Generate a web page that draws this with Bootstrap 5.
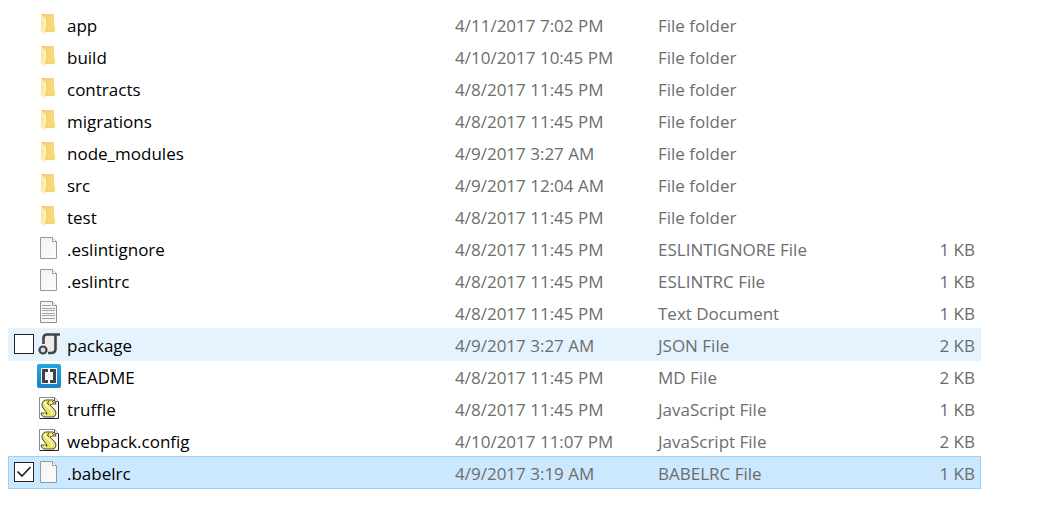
<!DOCTYPE html>
<html lang="en">
<head>
<meta charset="utf-8">
<meta name="viewport" content="width=device-width, initial-scale=1">
<title>Project files</title>
<link rel="stylesheet" href="https://cdn.jsdelivr.net/npm/bootstrap@5.3.0/dist/css/bootstrap.min.css">
<style>
body { font-family: "Open Sans", "Noto Sans", sans-serif; font-size: 17px; line-height: 24px; color: #000; background: #fff; }
.file-pane { padding: 8px 56px 24px 8px; }
.file-list { --bs-table-bg: transparent; table-layout: fixed; }
.file-list > tbody > tr > td { height: 32px; padding: 4px 0 0; vertical-align: top; white-space: nowrap; color: #6d6d6d; line-height: 28px; }
.file-list > tbody > tr > td:last-child { padding-right: 6px; }
.col-name { width: 447px; }
.col-date { width: 203px; }
.col-size { width: 100px; }
.name-cell { height: 28px; padding-left: 6px; color: #000; }
.name-cell svg { width: 24px; height: 24px; margin: 0 6px 4px 3px; flex: none; }
.pick { appearance: none; width: 20px; height: 20px; margin: 0 0 4px; border: 1px solid #222; background: #fff; border-radius: 0; flex: none; }
.pick:checked { background: #fff url("data:image/svg+xml,%3Csvg xmlns='http://www.w3.org/2000/svg' viewBox='0 0 18 18'%3E%3Cpath d='M2.5 8.5l4.5 4.5 8.5-9' fill='none' stroke='%23222' stroke-width='1.7'/%3E%3C/svg%3E") center / 18px; }
.file-list .row-hover { background: #e5f3ff; box-shadow: 0 1px #e5f3ff; }
.file-list .row-selected { background: #cce8ff; outline: 1px solid #99d1ff; outline-offset: -1px; }
.file-list > tbody > tr.row-selected > td { height: 33px; }
</style>
</head>
<body>
<svg class="position-absolute" width="0" height="0" aria-hidden="true">
  <defs>
    <linearGradient id="gold" x2="1"><stop stop-color="#e8c35e"/><stop offset=".35" stop-color="#f4d272"/><stop offset="1" stop-color="#fadb7c"/></linearGradient>
    <linearGradient id="flap" x2="1"><stop stop-color="#ffe69c"/><stop offset="1" stop-color="#fff0bd"/></linearGradient>
    <linearGradient id="sheet" x2="1" y2="1"><stop stop-color="#f1f3f3"/><stop offset="1" stop-color="#fdfdfd"/></linearGradient>
    <linearGradient id="azure" y2="1" x2="0"><stop stop-color="#1fa7e4"/><stop offset="1" stop-color="#1a82c8"/></linearGradient>
    <symbol id="i-folder" viewBox="0 0 24 24">
      <path d="M4 2h13v11l1 1v6H6L4 18z" fill="url(#gold)"/><path d="M4 2l5 4v11l-1 1v5l-4-3z" fill="url(#flap)"/>
    </symbol>
    <symbol id="i-file" viewBox="0 0 24 24">
      <path d="M3.5 1.5h12l4 4v17h-16z" fill="url(#sheet)" stroke="#989898"/><path d="M15.500 1.500v4h4" fill="#fff" stroke="#989898"/>
    </symbol>
    <symbol id="i-text" viewBox="0 0 24 24">
      <path d="M3.500 1.500h12l4 4v17h-16z" fill="#f8f8f8" stroke="#909090"/><path d="M15.500 1.500v4h4" fill="#fff" stroke="#909090"/>
      <path d="M5 5.500h9M5 8.500h13M5 10.500h13M5 13.500h13M5 15.500h13M5 18.500h13" stroke="#a3a3a3"/>
    </symbol>
    <symbol id="i-json" viewBox="0 0 24 24">
      <path d="M9 3h11v15q0 3-4 3h-6l-3-8z" fill="#ececec"/>
      <path d="M6.500 12V6q0-3.500 3.500-3.500h13M18.500 3v14q0 4-4.500 4h-3" fill="none" stroke="#454244" stroke-width="2.600"/>
      <circle cx="6" cy="18" r="3.500" fill="#ddd" stroke="#454244" stroke-width="2.200"/>
    </symbol>
    <symbol id="i-brackets" viewBox="0 0 24 24">
      <rect width="24" height="24" rx="2" fill="url(#azure)"/><rect x="4" y="4" width="16" height="16" fill="#f5f6f6"/>
      <path d="M11 5H5v14h6v-3H8V8h3zM13 5h6v14h-6v-3h3V8h-3z" fill="#414042"/>
    </symbol>
    <symbol id="i-script" viewBox="0 0 24 24">
      <path d="M2.500 1.500h15l4 4v17h-19z" fill="#fff" stroke="#8c8c8c"/><path d="M3 22.500h18.500V6" fill="none" stroke="#222"/><path d="M17.500 1.500v4h4" fill="#eee" stroke="#555"/>
      <path d="M8 4h8q3 1 3 4h-4l-2 1 4 4q4 4 0 8H7q-3-1-3-4h6L6 12q-3-5 2-8z" fill="#e9e264" stroke="#4a4a3a"/>
      <path d="M9 6q-2 2 1 4l4 4q2 3 0 5M7 18q2 0 2 2M15 5q-1 1 0 3" fill="none" stroke="#fffcc8" stroke-width="1.600"/>
      <path d="M12 5q-3 2 0 4M15 5q2 1 1 3M9 19q1-1 1-2" fill="none" stroke="#55511d"/>
    </symbol>
  </defs>
</svg>
<main class="file-pane">
<table class="table table-borderless file-list mb-0" aria-label="Files">
<colgroup><col class="col-name"><col class="col-date"><col><col class="col-size"></colgroup>
<tbody id="files"></tbody>
</table>
</main>
<script src="https://cdn.jsdelivr.net/npm/bootstrap@5.3.0/dist/js/bootstrap.bundle.min.js"></script>
<script>
const files = [
  ["folder", "app", "4/11/2017 7:02 PM", "File folder", ""],
  ["folder", "build", "4/10/2017 10:45 PM", "File folder", ""],
  ["folder", "contracts", "4/8/2017 11:45 PM", "File folder", ""],
  ["folder", "migrations", "4/8/2017 11:45 PM", "File folder", ""],
  ["folder", "node_modules", "4/9/2017 3:27 AM", "File folder", ""],
  ["folder", "src", "4/9/2017 12:04 AM", "File folder", ""],
  ["folder", "test", "4/8/2017 11:45 PM", "File folder", ""],
  ["file", ".eslintignore", "4/8/2017 11:45 PM", "ESLINTIGNORE File", "1 KB"],
  ["file", ".eslintrc", "4/8/2017 11:45 PM", "ESLINTRC File", "1 KB"],
  ["text", "", "4/8/2017 11:45 PM", "Text Document", "1 KB"],
  ["json", "package", "4/9/2017 3:27 AM", "JSON File", "2 KB", "hover"],
  ["brackets", "README", "4/8/2017 11:45 PM", "MD File", "2 KB"],
  ["script", "truffle", "4/8/2017 11:45 PM", "JavaScript File", "1 KB"],
  ["script", "webpack.config", "4/10/2017 11:07 PM", "JavaScript File", "2 KB"],
  ["file", ".babelrc", "4/9/2017 3:19 AM", "BABELRC File", "1 KB", "selected"]
];
document.getElementById("files").innerHTML = files.map(([icon, name, date, type, size, state], i) => `
  <tr class="${state ? "row-" + state : ""}">
    <td><div class="name-cell d-flex align-items-center">
      <input class="pick ${state ? "" : "invisible"}" type="checkbox" id="f${i}" ${state === "selected" ? "checked" : ""}>
      <svg aria-hidden="true"><use href="#i-${icon}"/></svg><label for="f${i}">${name}</label>
    </div></td>
    <td>${date}</td><td>${type}</td><td class="text-end">${size}</td>
  </tr>`).join("");
</script>
</body>
</html>
